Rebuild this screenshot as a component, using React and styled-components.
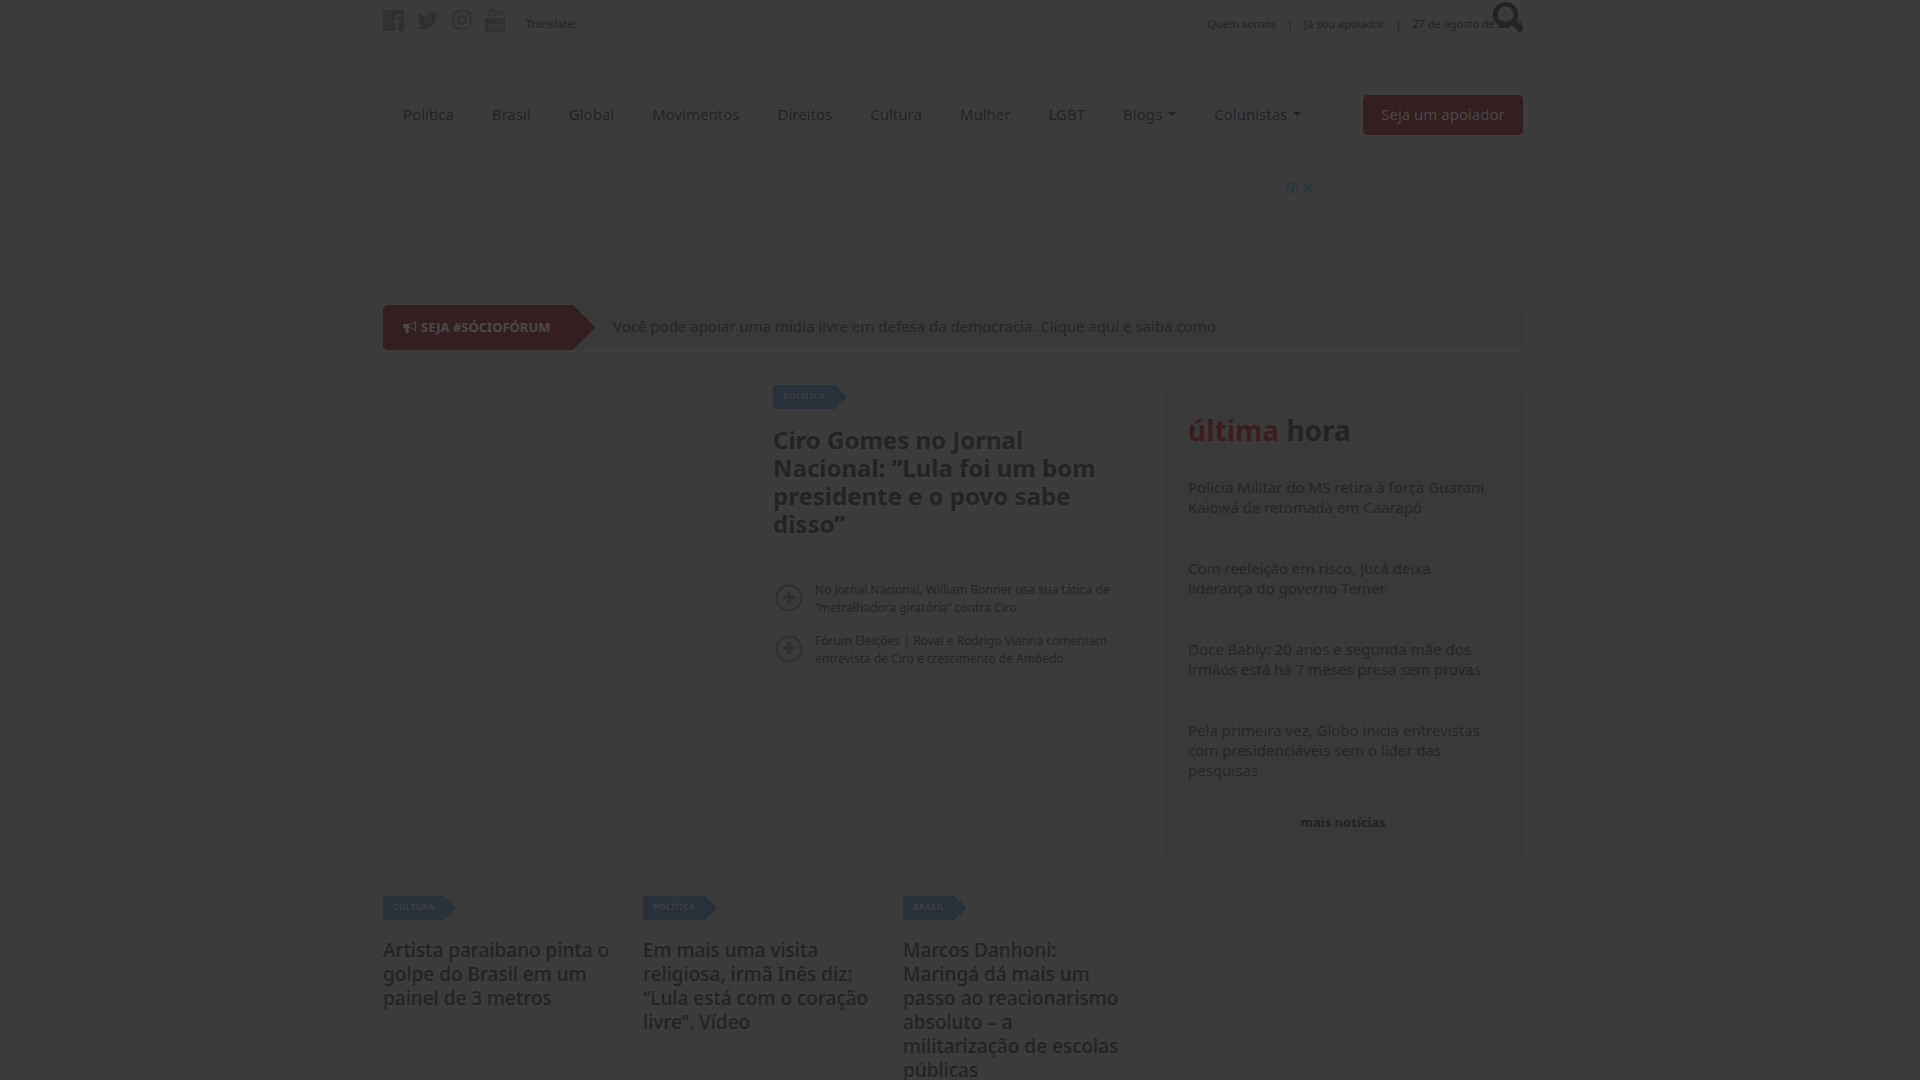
import React from "react";
import styled, { createGlobalStyle } from "styled-components";
import { FaTwitter, FaInstagram } from "react-icons/fa";

const color = {
  page: "#3c3c3c",
  panel: "#3a3a3a",
  line: "#393939",
  panelLine: "#373737",
  ink: "#242424",
  soft: "#272727",
  icon: "#313131",
  red: "#331e20",
  blue: "#29313a",
  onRed: "#484848",
  onBlue: "#3d4043",
  ad: "#1b3a42",
};

const GlobalStyle = createGlobalStyle`
  * { box-sizing: border-box; }
  body {
    margin: 0;
    background: ${color.page};
    color: ${color.ink};
    font-family: "Noto Sans", "Open Sans", sans-serif;
  }
  a { color: inherit; text-decoration: none; }
  h1, h2, h3, p, ul { margin: 0; padding: 0; }
  ul { list-style: none; }
  svg { display: block; }
`;

const Page = styled.div`
  min-height: 100vh;
  padding-right: 14px;
`;

const Container = styled.div`
  max-width: 1140px;
  margin: 0 auto;
`;

const TopBar = styled.div`
  position: relative;
  display: flex;
  justify-content: space-between;
  height: 95px;
  padding-top: 7px;
  font-size: 11px;
  line-height: 16px;
`;

const Social = styled.div`
  display: flex;
  gap: 13px;
  height: 26px;
  color: ${color.icon};
  align-items: center;
`;

const SocialLink = styled.a`
  display: block;
  width: 21px;
`;

const Translate = styled.span`
  margin-left: 7px;
  padding-top: 8px;
  color: ${color.ink};
`;

const TopLinks = styled.div`
  display: flex;
  gap: 11px;
  padding-top: 9px;
`;

const SearchButton = styled.button`
  position: absolute;
  top: 1px;
  right: 0;
  padding: 0;
  border: 0;
  background: none;
  color: ${color.ink};
`;

const NavBar = styled.nav`
  display: flex;
  align-items: flex-start;
  justify-content: space-between;
  height: 50px;
  border-bottom: 1px solid ${color.line};
`;

const NavList = styled.ul`
  display: flex;
  gap: 38px;
  padding-left: 20px;
  font-size: 15px;
  line-height: 38px;
`;

const NavLink = styled.a`
  display: flex;
  align-items: center;
  gap: 6px;
`;

const Caret = styled.span`
  border: 4px solid transparent;
  border-top-color: ${color.ink};
  border-bottom: 0;
`;

const SupportButton = styled.button`
  width: 160px;
  height: 40px;
  padding: 0 0 3px;
  border: 0;
  border-radius: 5px;
  background: ${color.red};
  color: ${color.onRed};
  font: 400 15px "Noto Sans", "Open Sans", sans-serif;
`;

const AdSlot = styled.div`
  display: flex;
  justify-content: flex-end;
  gap: 4px;
  height: 160px;
  padding: 37px 209px 0 0;
  color: ${color.ad};
`;

const Banner = styled.a`
  display: flex;
  height: 45px;
  border-radius: 5px;
  background: ${color.panel};
  color: ${color.soft};
  font-size: 15px;
  line-height: 43px;
`;

const BannerTag = styled.span`
  display: flex;
  align-items: center;
  gap: 4px;
  width: 190px;
  padding-left: 20px;
  border-radius: 5px 0 0 5px;
  background: ${color.red};
  color: ${color.onRed};
  font-size: 13px;
  font-weight: 700;
`;

const Arrow = styled.span`
  width: ${(p) => p.$w}px;
  background: ${(p) => p.$color};
  clip-path: polygon(0 0, 100% 50%, 0 100%);
`;

const BannerText = styled.span`
  padding-left: 18px;
`;

const Featured = styled.main`
  display: grid;
  grid-template-columns: 360px 360px 360px;
  gap: 30px;
  padding-top: 35px;
`;

const Story = styled.article`
  grid-column: 2;
`;

const TagRow = styled.a`
  display: flex;
  height: 24px;
`;

const TagLabel = styled.span`
  padding: 0 10px;
  border-radius: 3px 0 0 3px;
  background: ${color.blue};
  color: ${color.onBlue};
  font-size: 9px;
  font-weight: 700;
  line-height: 22px;
`;

const Headline = styled.h1`
  padding: 17px 20px 23px 0;
  border-bottom: 1px solid ${color.line};
  font-size: 24px;
  font-weight: 700;
  line-height: 28px;
`;

const Related = styled.ul`
  display: grid;
  gap: 15px;
  padding-top: 19px;
`;

const RelatedItem = styled.li`
  display: flex;
  gap: 12px;
  padding-left: 2px;
  color: ${color.icon};
`;

const RelatedLink = styled.a`
  flex: 1;
  color: ${color.soft};
  font-size: 12px;
  line-height: 18px;
`;

const Panel = styled.aside`
  padding: 25px 25px 27px;
  border-radius: 5px;
  background: ${color.panel};
  color: ${color.soft};
`;

const PanelTitle = styled.h2`
  padding-bottom: 8px;
  color: ${color.ink};
  font-size: 28px;
  font-weight: 700;
  line-height: 40px;
`;

const Highlight = styled.span`
  color: #3b1d1f;
`;

const NewsItem = styled.li`
  padding: 19px 0 21px;
  border-bottom: 1px solid ${color.panelLine};
  font-size: 15px;
  line-height: 20px;
`;

const More = styled.a`
  display: block;
  padding-top: 10px;
  color: ${color.ink};
  font-size: 13px;
  font-weight: 700;
  line-height: 20px;
  text-align: center;
`;

const Cards = styled.section`
  display: grid;
  grid-template-columns: 230px 230px 230px;
  gap: 30px;
  padding-top: 37px;
`;

const CardTitle = styled.h3`
  padding-top: 18px;
  font-size: 19px;
  font-weight: 500;
  line-height: 24px;
`;

const Tag = ({ children }) => (
  <TagRow href="#">
    <TagLabel>{children}</TagLabel>
    <Arrow $w={12} $color={color.blue} />
  </TagRow>
);

const FacebookIcon = () => (
  <svg width="21" height="21" viewBox="0 0 21 21" fill="currentColor">
    <path d="M1 0h18.500a1 1 0 0 1 1 1v19a1 1 0 0 1-1 1H15.400v-8H18l.4-3H15.400V8c0-.9.3-1.500 1.500-1.500H18.500V3.700c-.3 0-1.200-.1-2.200-.1-2.400 0-3.900 1.400-3.900 4V10H9.900v3h2.500v8H1a1 1 0 0 1-1-1V1a1 1 0 0 1 1-1z" />
  </svg>
);

const YoutubeIcon = () => (
  <svg width="21" height="26" viewBox="0 0 21 26" fill="currentColor">
    <text x="10" y="9" textAnchor="middle" fontFamily="Liberation Sans Narrow, Liberation Sans, sans-serif" fontWeight="700" fontSize="10">You</text>
    <rect x="0" y="11" width="20" height="14" rx="3" />
    <text x="10" y="21" textAnchor="middle" fill={color.page} fontFamily="Liberation Sans Narrow, Liberation Sans, sans-serif" fontWeight="700" fontSize="8">Tube</text>
  </svg>
);

const SearchIcon = () => (
  <svg width="30" height="31" viewBox="0 0 30 31" fill="none" stroke="currentColor">
    <circle cx="12.500" cy="13.500" r="10.300" strokeWidth="4.600" />
    <path d="M20 21l7 7" strokeWidth="5.500" strokeLinecap="round" />
  </svg>
);

const BullhornIcon = () => (
  <svg width="14" height="13" viewBox="0 0 14 13" fill="currentColor">
    <path fillRule="evenodd" d="M13 4.500V1c0-.6-.4-1-1-1C10 1.800 7.700 3 5.500 3H1.200C.5 3 0 3.500 0 4.200v1.600C0 6.500.5 7 1.200 7h1.100c-.3 1.300.2 3 .7 4.700 1 .6 2.500.5 3.200-.2-.7-.6-1-1.200-.5-2-.7-.7-.5-1.700.1-2.400C8 7.300 10.200 8.400 12 10c.6 0 1-.4 1-1V5.800c.7-.3.700-1 0-1.300zM12 8.600C10.200 7.200 8.200 6.300 6.100 6V4C8.200 3.700 10.200 2.800 12 1.400z" />
  </svg>
);

const PlusIcon = () => (
  <svg width="28" height="36" viewBox="0 0 28 36" fill="none" stroke="currentColor">
    <circle cx="14" cy="17" r="12.500" strokeWidth="2" />
    <path d="M8 16.500h12M14 10.500v12" strokeWidth="3.500" />
  </svg>
);

const InfoIcon = () => (
  <svg width="13" height="13" viewBox="0 0 13 13" fill="none" stroke="currentColor">
    <circle cx="6.500" cy="6.500" r="5.500" />
    <path d="M6.500 3v1.500M5.300 5.500h1.500v4M5 9.500h3" strokeWidth="1.300" />
  </svg>
);

const CloseIcon = () => (
  <svg width="11" height="13" viewBox="0 0 11 13" fill="none" stroke="currentColor">
    <path d="M1 2l9 9M10 2l-9 9" strokeWidth="1.300" />
  </svg>
);

const sections = ["Política", "Brasil", "Global", "Movimentos", "Direitos", "Cultura", "Mulher", "LGBT"];

const related = [
  "No Jornal Nacional, William Bonner usa sua tática de “metralhadora giratória” contra Ciro",
  "Fórum Eleições | Rovai e Rodrigo Vianna comentam entrevista de Ciro e crescimento de Amôedo",
];

const latest = [
  "Polícia Militar do MS retira à força Guarani Kaiowá de retomada em Caarapó",
  "Com reeleição em risco, Jucá deixa liderança do governo Temer",
  "Doce Babiy: 20 anos e segunda mãe dos irmãos está há 7 meses presa sem provas",
  "Pela primeira vez, Globo inicia entrevistas com presidenciáveis sem o líder das pesquisas",
];

const cards = [
  ["CULTURA", "Artista paraibano pinta o golpe do Brasil em um painel de 3 metros"],
  ["POLÍTICA", "Em mais uma visita religiosa, irmã Inês diz: “Lula está com o coração livre”. Vídeo"],
  ["BRASIL", "Marcos Danhoni: Maringá dá mais um passo ao reacionarismo absoluto – a militarização de escolas públicas"],
];

export default function App() {
  return (
    <Page>
      <GlobalStyle />
      <Container>
        <TopBar>
          <Social>
            <SocialLink href="#" aria-label="Facebook"><FacebookIcon /></SocialLink>
            <SocialLink href="#" aria-label="Twitter"><FaTwitter size={21} /></SocialLink>
            <SocialLink href="#" aria-label="Instagram"><FaInstagram size={22} /></SocialLink>
            <SocialLink href="#" aria-label="YouTube"><YoutubeIcon /></SocialLink>
            <Translate>Translate:</Translate>
          </Social>
          <TopLinks>
            <a href="#">Quem somos</a>
            <span>|</span>
            <a href="#">Já sou apoiador</a>
            <span>|</span>
            <span>27 de agosto de 2018</span>
          </TopLinks>
          <SearchButton aria-label="Buscar"><SearchIcon /></SearchButton>
        </TopBar>
        <NavBar>
          <NavList>
            {sections.map((name) => (
              <li key={name}><NavLink href="#">{name}</NavLink></li>
            ))}
            <li><NavLink href="#">Blogs<Caret /></NavLink></li>
            <li><NavLink href="#">Colunistas<Caret /></NavLink></li>
          </NavList>
          <SupportButton>Seja um apoiador</SupportButton>
        </NavBar>
        <AdSlot>
          <InfoIcon />
          <CloseIcon />
        </AdSlot>
        <Banner href="#">
          <BannerTag><BullhornIcon />SEJA #SÓCIOFÓRUM</BannerTag>
          <Arrow $w={22} $color={color.red} />
          <BannerText>Você pode apoiar uma mídia livre em defesa da democracia. Clique aqui e saiba como</BannerText>
        </Banner>
        <Featured>
          <Story>
            <Tag>POLÍTICA</Tag>
            <Headline>Ciro Gomes no Jornal Nacional: “Lula foi um bom presidente e o povo sabe disso”</Headline>
            <Related>
              {related.map((text) => (
                <RelatedItem key={text}><PlusIcon /><RelatedLink href="#">{text}</RelatedLink></RelatedItem>
              ))}
            </Related>
          </Story>
          <Panel>
            <PanelTitle><Highlight>última</Highlight> hora</PanelTitle>
            <ul>
              {latest.map((text) => (
                <NewsItem key={text}><a href="#">{text}</a></NewsItem>
              ))}
            </ul>
            <More href="#">mais notícias</More>
          </Panel>
        </Featured>
        <Cards>
          {cards.map(([tag, title]) => (
            <article key={tag}>
              <Tag>{tag}</Tag>
              <CardTitle>{title}</CardTitle>
            </article>
          ))}
        </Cards>
      </Container>
    </Page>
  );
}
